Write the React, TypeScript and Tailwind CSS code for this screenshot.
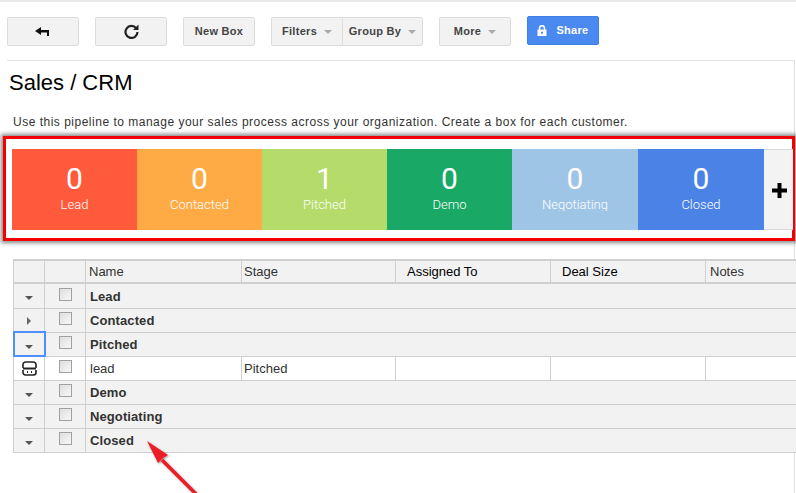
const stages = [
  { n: "0", label: "Lead", bg: "bg-[#ff5a3c]", w: "w-[125px]", clip: "" },
  { n: "0", label: "Contacted", bg: "bg-[#ffab45]", w: "w-[125px]", clip: "" },
  { n: "1", label: "Pitched", bg: "bg-[#b5db6b]", w: "w-[125px]", clip: "" },
  { n: "0", label: "Demo", bg: "bg-[#19a865]", w: "w-[125px]", clip: "" },
  { n: "0", label: "Negotiating", bg: "bg-[#9fc5e6]", w: "w-[126px]", clip: "h-[12px] overflow-hidden" },
  { n: "0", label: "Closed", bg: "bg-[#4a82e6]", w: "w-[126px]", clip: "" },
];

const groups = ["Lead", "Contacted", "Pitched", "Demo", "Negotiating", "Closed"];

function Caret({ className = "border-t-[#888]" }: { className?: string }) {
  return <span className={`inline-block w-0 h-0 border-x-4 border-x-transparent border-t-4 ${className}`} />;
}

function Btn({ children, className = "w-[72px]" }: { children: React.ReactNode; className?: string }) {
  return (
    <button className={`h-[29px] flex items-center justify-center gap-[7px] bg-[#f2f2f2] border border-[#dcdcdc] rounded-[2px] text-[11px] font-bold text-[#444] tracking-[0.3px] ${className}`}>
      {children}
    </button>
  );
}

function Check() {
  return <span className="block w-[13px] h-[13px] mx-auto -mt-[3px] border border-[#a0a0a0] bg-gradient-to-br from-[#dedede] to-[#f7f7f7]" />;
}

function GroupRow({ name, first }: { name: string; first?: boolean }) {
  const focused = name === "Pitched";
  return (
    <tr className={`${first ? "h-[25px]" : "h-6"} bg-[#f2f2f2] border-b border-[#cfcfcf]`}>
      <td className={`p-0 text-center border-r border-[#cfcfcf] ${focused ? "outline-2 -outline-offset-1 outline-[#4d90fe]" : ""}`}>
        {name === "Contacted" ? (
          <span className="inline-block w-0 h-0 border-y-4 border-y-transparent border-l-4 border-l-[#666] align-middle" />
        ) : (
          <span className="inline-block align-middle"><Caret className="border-t-[#555] block" /></span>
        )}
      </td>
      <td className="p-0 border-r border-[#cfcfcf]"><Check /></td>
      <td colSpan={4} className="p-0 pt-[2px] pl-[4px] text-[13px] font-bold text-[#333] tracking-[0.1px]">{name}</td>
      <td className="p-0" />
    </tr>
  );
}

export default function App() {
  return (
    <div className="relative w-[796px] h-[493px] overflow-hidden bg-white font-['Liberation_Sans',Arial,sans-serif]">
      <div className="h-[2px] bg-[#e8e8e8]" />
      <div className="h-[58px] pl-[7px] pt-[15px] flex items-start gap-4">
        <Btn>
          <svg className="mr-[2px]" width="14" height="10" viewBox="0 0 14 10" fill="#111">
            <path d="M0 4 6 0V3H14V9H12V5.500H6V8Z" />
          </svg>
        </Btn>
        <Btn>
          <svg width="15" height="15" viewBox="0 0 15 15" fill="none" stroke="#222" strokeWidth="2.200">
            <path d="M12.200 4.200A6 6 0 1 0 13.500 8" />
            <path d="M14.500 0.500V6H9Z" fill="#222" stroke="none" />
          </svg>
        </Btn>
        <Btn>New Box</Btn>
        <div className="flex">
          <Btn className="w-[72px] rounded-r-none">Filters <Caret className="border-t-[#aaa]" /></Btn>
          <Btn className="w-[81px] -ml-px rounded-l-none">Group By <Caret className="border-t-[#aaa]" /></Btn>
        </div>
        <Btn>More <Caret className="border-t-[#aaa]" /></Btn>
        <button className="h-[29px] -mt-px w-[72px] flex items-center justify-center gap-[9px] bg-[#4a8af0] border border-[#3f7fe6] rounded-[2px] text-[11px] font-bold text-white tracking-[0.3px]">
          <svg width="10" height="11" viewBox="0 0 10 11">
            <path d="M2.500 5V3.200a2.500 2.500 0 0 1 5 0V5" fill="none" stroke="#fff" strokeWidth="1.600" />
            <path d="M0.500 4.600h9v6.400h-9z" fill="#fff" />
            <circle cx="5" cy="7.800" r="1.100" fill="#4a8af0" />
          </svg>
          Share
        </button>
      </div>

      <div className="ml-[7px] mr-[1px] h-[433px] border-t border-r border-[#e2e2e2]">
        <h1 className="ml-[2px] mt-[9px] text-[22px] leading-[26px] text-black font-normal">Sales / CRM</h1>
        <p className="ml-[6px] mt-[18px] text-[12px] leading-[16px] text-[#333] tracking-[0.5px]">
          Use this pipeline to manage your sales process across your organization. Create a box for each customer.
        </p>

        <section className="-ml-[4px] -mr-[1px] mt-[6px] h-[105px] border-[3px] border-[#f50000] shadow-[0_0_4px_2px_rgba(60,60,60,0.6)] pl-[6px] pt-[10px]">
          <div className="flex h-[81px] font-['Roboto',sans-serif] text-white">
            {stages.map((s) => (
              <div key={s.label} className={`${s.w} ${s.bg} shrink-0 flex flex-col items-center pt-[12px]`}>
                <div className="text-[30px] leading-[35px] font-normal">{s.n}</div>
                <div className={`${s.clip} text-[13px] leading-[12px] mt-[3px] font-light`}>{s.label}</div>
              </div>
            ))}
            <div className="w-[29px] shrink-0 bg-[#f3f3f3] border-t border-[#d8d8d8] border-b flex items-center justify-center pt-[2px] pl-[2px] text-black">
              <svg width="15" height="15" viewBox="0 0 15 15" fill="#000"><path d="M5.500 0h4v5.500H15v4H9.500V15h-4V9.500H0v-4h5.500z" /></svg>
            </div>
          </div>
        </section>

        <table className="ml-[6px] mt-[18px] w-[783px] table-fixed border-collapse border-t-2 border-l border-[#cfcfcf] text-[13px] text-[#333]">
          <colgroup>
            <col className="w-[31px]" />
            <col className="w-[41px]" />
            <col className="w-[156px]" />
            <col className="w-[154px]" />
            <col className="w-[155px]" />
            <col className="w-[155px]" />
            <col />
          </colgroup>
          <thead>
            <tr className="h-[23px] bg-[#f2f2f2] border-b-2 border-[#cfcfcf] text-left font-normal">
              <th className="p-0 border-r border-[#cfcfcf]" />
              <th className="p-0 border-r border-[#cfcfcf]" />
              <th className="p-0 pl-[3px] font-normal border-r border-[#cfcfcf]">Name</th>
              <th className="p-0 pl-[2px] font-normal border-r border-[#cfcfcf]">Stage</th>
              <th className="p-0 pl-[11px] pt-[1px] font-normal border-r border-[#cfcfcf] text-black">Assigned To</th>
              <th className="p-0 pl-[11px] pt-[1px] font-normal border-r border-[#cfcfcf] text-black">Deal Size</th>
              <th className="p-0 pl-[4px] font-normal">Notes</th>
            </tr>
          </thead>
          <tbody>
            {groups.slice(0, 3).map((g, i) => <GroupRow key={g} name={g} first={i === 0} />)}
            <tr className="h-6 bg-white border-b border-[#cfcfcf]">
              <td className="p-0 text-center border-r border-[#cfcfcf]">
                <svg className="inline-block align-middle" width="15" height="15" viewBox="0 0 15 15" fill="none" stroke="#222" strokeWidth="1.600">
                  <path d="M1 7V3.500A2.500 2.500 0 0 1 3.500 1h8A2.500 2.500 0 0 1 14 3.500V7" />
                  <path d="M1 9v2.500A2.500 2.500 0 0 0 3.500 14h8a2.500 2.500 0 0 0 2.500-2.500V9" />
                  <path d="M1 7.500h13" strokeWidth="2" />
                  <path d="M5.500 10v2M9.500 10v2" strokeWidth="1" />
                </svg>
              </td>
              <td className="p-0 border-r border-[#cfcfcf]"><Check /></td>
              <td className="p-0 pt-[1px] pl-[4px] border-r border-[#cfcfcf]">lead</td>
              <td className="p-0 pt-[1px] pl-[2px] border-r border-[#cfcfcf]">Pitched</td>
              <td className="p-0 border-r border-[#cfcfcf]" />
              <td className="p-0 border-r border-[#cfcfcf]" />
              <td className="p-0" />
            </tr>
            {groups.slice(3).map((g) => <GroupRow key={g} name={g} />)}
          </tbody>
        </table>
      </div>

      <svg className="absolute left-[140px] top-[436px] drop-shadow-[1px_1px_1px_rgba(0,0,0,0.4)]" width="60" height="57" viewBox="0 0 60 57">
        <path d="M56 58 22 24" stroke="#ee1c25" strokeWidth="3.500" fill="none" />
        <path d="M7 5 28 19 23 22 18 27Z" fill="#ee1c25" />
      </svg>
    </div>
  );
}
